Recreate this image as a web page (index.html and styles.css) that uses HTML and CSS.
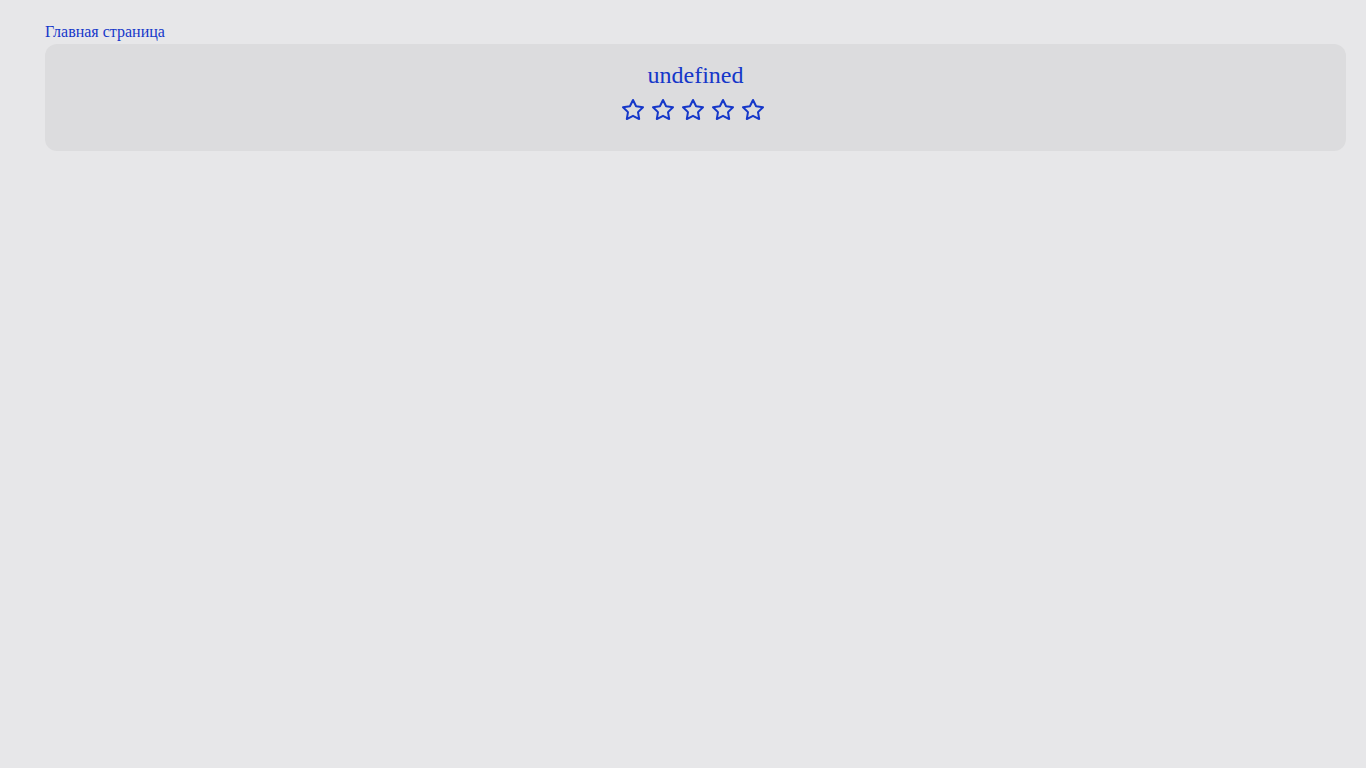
FILE: index.html
```html
<!DOCTYPE html>
<html lang="ru">
<head>
<meta charset="utf-8">
<title>Главная страница</title>
<link rel="stylesheet" href="styles.css">
</head>
<body>
<div class="page">
  <a class="home-link" href="#">Главная страница</a>
  <section class="card">
    <h1 class="title">undefined</h1>
    <div class="stars">
      <svg class="star" viewBox="0 0 24 24"><polygon points="12,2 15.09,8.26 22,9.27 17,14.14 18.18,21.02 12,17.77 5.82,21.02 7,14.14 2,9.27 8.91,8.26"/></svg><svg class="star" viewBox="0 0 24 24"><polygon points="12,2 15.09,8.26 22,9.27 17,14.14 18.18,21.02 12,17.77 5.82,21.02 7,14.14 2,9.27 8.91,8.26"/></svg><svg class="star" viewBox="0 0 24 24"><polygon points="12,2 15.09,8.26 22,9.27 17,14.14 18.18,21.02 12,17.77 5.82,21.02 7,14.14 2,9.27 8.91,8.26"/></svg><svg class="star" viewBox="0 0 24 24"><polygon points="12,2 15.09,8.26 22,9.27 17,14.14 18.18,21.02 12,17.77 5.82,21.02 7,14.14 2,9.27 8.91,8.26"/></svg><svg class="star" viewBox="0 0 24 24"><polygon points="12,2 15.09,8.26 22,9.27 17,14.14 18.18,21.02 12,17.77 5.82,21.02 7,14.14 2,9.27 8.91,8.26"/></svg>
    </div>
  </section>
</div>
</body>
</html>
```
FILE: styles.css
```css
html, body {
  margin: 0;
  padding: 0;
  background: #e7e7e9;
  font-family: "Liberation Serif", "Times New Roman", serif;
  color: #1537c9;
}
.page {
  padding: 23px 20px 0 45px;
}
.home-link {
  display: block;
  width: max-content;
  font-size: 16px;
  line-height: 18px;
  color: #1537c9;
  text-decoration: none;
  margin-bottom: 3px;
}
.card {
  background: #dcdcde;
  border-radius: 12px;
  padding: 18px 0 29px;
  text-align: center;
}
.title {
  margin: 0;
  font-size: 24px;
  font-weight: normal;
  line-height: 27px;
}
.stars {
  margin-top: 9px;
  height: 24px;
  font-size: 0;
}
.star {
  width: 24px;
  height: 24px;
  margin-right: 6px;
  fill: none;
  stroke: #1537c9;
  stroke-width: 2;
  stroke-linejoin: round;
  vertical-align: top;
}
```
